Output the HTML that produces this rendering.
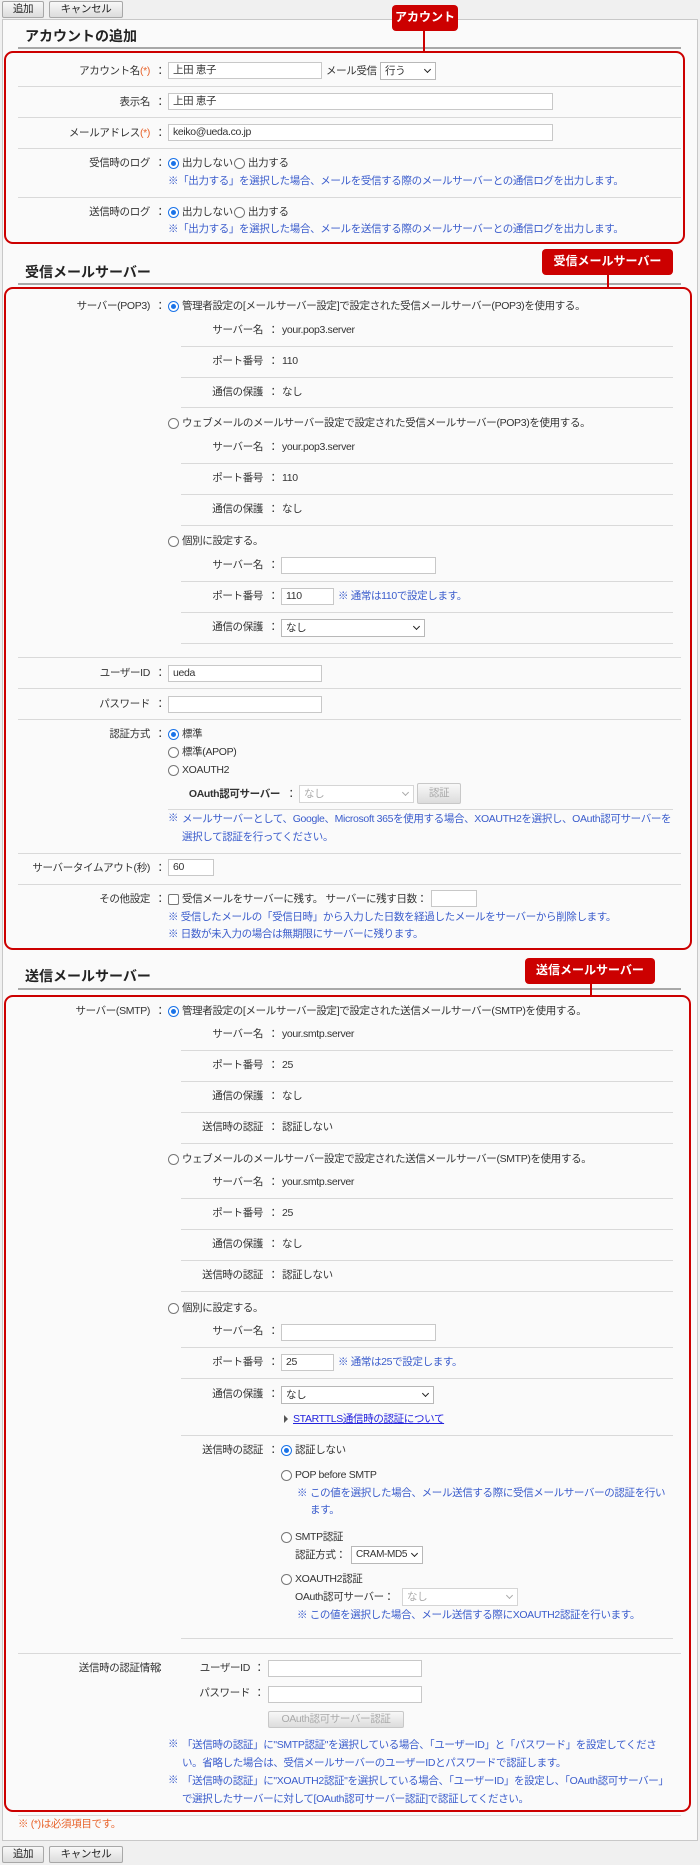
<!DOCTYPE html>
<html><head><meta charset="utf-8"><style>
*{margin:0;padding:0;box-sizing:border-box}
body{width:700px;height:1865px;background:#f0f0f0;position:relative;overflow:hidden;font-family:"Liberation Sans","Noto Sans CJK JP",sans-serif;font-size:10.5px;color:#333;letter-spacing:-0.35px}
.a{position:absolute}
.t{position:absolute;white-space:nowrap;line-height:16px;height:16px}
.r{text-align:right}
.n{color:#3a5ccc}
.o{color:#e8642c}
.h{position:absolute;left:25px;font-size:14px;font-weight:bold;color:#222;line-height:18px;white-space:nowrap;letter-spacing:0}
.ul{position:absolute;left:18px;width:663px;height:2px;background:#a8a8a8}
.s{position:absolute;height:1px;background:#d9d9d9}
.in{position:absolute;height:17px;background:#fff;border:1px solid #c8c8c8;line-height:15px;padding-left:4px;font-size:10.5px;white-space:nowrap}
.sel{position:absolute;height:18px;background:#fff;border:1px solid #b8b8b8;line-height:16px;padding-left:4px;white-space:nowrap;overflow:hidden}
.sel:after{content:"";position:absolute;right:5px;top:4px;width:4px;height:4px;border-right:1.5px solid #222;border-bottom:1.5px solid #222;transform:rotate(45deg)}
.sel.d{color:#aaa;border-color:#d5d5d5}
.sel.d:after{border-color:#aaa}
.rb{position:absolute;width:11px;height:11px;border:1px solid #777;border-radius:50%;background:#fff}
.rb.c{border-color:#1a73e8}
.rb.c:after{content:"";position:absolute;left:2px;top:2px;width:5px;height:5px;border-radius:50%;background:#1a73e8}
.cb{position:absolute;width:11px;height:11px;border:1px solid #777;border-radius:2px;background:#fff}
.btn{position:absolute;height:17px;border:1px solid #a8a8a8;border-radius:2px;background:linear-gradient(#f8f8f8,#dcdcdc);text-align:center;line-height:15px;font-size:10.5px;color:#222}
.btn.d{color:#aaa;border-color:#c8c8c8}
.box{position:absolute;border:2px solid #cc0000;border-radius:9px}
.lab{position:absolute;background:#cc0000;color:#fff;font-weight:bold;font-size:12px;border-radius:4px;text-align:center;line-height:24px;height:26px;letter-spacing:0}
.ln{position:absolute;width:2px;background:#cc0000}
</style></head><body>

<div class="btn" style="left:2px;top:1px;width:42px">追加</div>
<div class="btn" style="left:49px;top:1px;width:74px">キャンセル</div>

<div class="a" style="left:2px;top:19px;width:696px;height:1822px;background:#fafafa;border:1px solid #c8c8c8"></div>

<!-- Account -->
<div class="h" style="top:27px">アカウントの追加</div>
<div class="ul" style="top:47px"></div>
<div class="box" style="left:4px;top:51px;width:681px;height:193px"></div>
<div class="ln" style="left:423px;top:30px;height:22px"></div>
<div class="lab" style="left:392px;top:5px;width:66px">アカウント</div>

<div class="t r" style="right:550px;top:63px">アカウント名<span class="o">(*)</span></div><div class="t" style="left:155px;top:63px">：</div>
<div class="in" style="left:168px;top:62px;width:154px">上田 恵子</div>
<div class="t" style="left:326px;top:63px">メール受信</div>
<div class="sel" style="left:380px;top:62px;width:56px">行う</div>
<div class="s" style="left:18px;top:86px;width:663px"></div>
<div class="t r" style="right:550px;top:94px">表示名</div><div class="t" style="left:155px;top:94px">：</div>
<div class="in" style="left:168px;top:93px;width:385px">上田 恵子</div>
<div class="s" style="left:18px;top:117px;width:663px"></div>
<div class="t r" style="right:550px;top:125px">メールアドレス<span class="o">(*)</span></div><div class="t" style="left:155px;top:125px">：</div>
<div class="in" style="left:168px;top:124px;width:385px">keiko@ueda.co.jp</div>
<div class="s" style="left:18px;top:148px;width:663px"></div>
<div class="t r" style="right:550px;top:155px">受信時のログ</div><div class="t" style="left:155px;top:155px">：</div>
<div class="rb c" style="left:168px;top:158px"></div><div class="t" style="left:182px;top:155px">出力しない</div>
<div class="rb" style="left:234px;top:158px"></div><div class="t" style="left:248px;top:155px">出力する</div>
<div class="t n" style="left:168px;top:173px">※「出力する」を選択した場合、メールを受信する際のメールサーバーとの通信ログを出力します。</div>
<div class="s" style="left:18px;top:197px;width:663px"></div>
<div class="t r" style="right:550px;top:204px">送信時のログ</div><div class="t" style="left:155px;top:204px">：</div>
<div class="rb c" style="left:168px;top:207px"></div><div class="t" style="left:182px;top:204px">出力しない</div>
<div class="rb" style="left:234px;top:207px"></div><div class="t" style="left:248px;top:204px">出力する</div>
<div class="t n" style="left:168px;top:221px">※「出力する」を選択した場合、メールを送信する際のメールサーバーとの通信ログを出力します。</div>

<!-- POP3 -->
<div class="h" style="top:263px">受信メールサーバー</div>
<div class="ul" style="top:283px"></div>
<div class="box" style="left:4px;top:287px;width:688px;height:663px"></div>
<div class="ln" style="left:607px;top:270px;height:18px"></div>
<div class="lab" style="left:542px;top:249px;width:131px">受信メールサーバー</div>

<div class="t r" style="right:550px;top:298px">サーバー(POP3)</div><div class="t" style="left:155px;top:298px">：</div>
<div class="rb c" style="left:168px;top:301px"></div><div class="t" style="left:182px;top:298px">管理者設定の[メールサーバー設定]で設定された受信メールサーバー(POP3)を使用する。</div>
<div class="t r" style="right:437px;top:322px">サーバー名</div><div class="t" style="left:268px;top:322px">：</div><div class="t" style="left:282px;top:322px">your.pop3.server</div>
<div class="s" style="left:181px;top:346px;width:492px"></div>
<div class="t r" style="right:437px;top:353px">ポート番号</div><div class="t" style="left:268px;top:353px">：</div><div class="t" style="left:282px;top:353px">110</div>
<div class="s" style="left:181px;top:377px;width:492px"></div>
<div class="t r" style="right:437px;top:384px">通信の保護</div><div class="t" style="left:268px;top:384px">：</div><div class="t" style="left:282px;top:384px">なし</div>
<div class="s" style="left:181px;top:407px;width:492px"></div>
<div class="rb" style="left:168px;top:418px"></div><div class="t" style="left:182px;top:415px">ウェブメールのメールサーバー設定で設定された受信メールサーバー(POP3)を使用する。</div>
<div class="t r" style="right:437px;top:439px">サーバー名</div><div class="t" style="left:268px;top:439px">：</div><div class="t" style="left:282px;top:439px">your.pop3.server</div>
<div class="s" style="left:181px;top:463px;width:492px"></div>
<div class="t r" style="right:437px;top:470px">ポート番号</div><div class="t" style="left:268px;top:470px">：</div><div class="t" style="left:282px;top:470px">110</div>
<div class="s" style="left:181px;top:494px;width:492px"></div>
<div class="t r" style="right:437px;top:501px">通信の保護</div><div class="t" style="left:268px;top:501px">：</div><div class="t" style="left:282px;top:501px">なし</div>
<div class="s" style="left:181px;top:525px;width:492px"></div>
<div class="rb" style="left:168px;top:536px"></div><div class="t" style="left:182px;top:533px">個別に設定する。</div>
<div class="t r" style="right:437px;top:557px">サーバー名</div><div class="t" style="left:268px;top:557px">：</div>
<div class="in" style="left:281px;top:557px;width:155px"></div>
<div class="s" style="left:181px;top:581px;width:492px"></div>
<div class="t r" style="right:437px;top:588px">ポート番号</div><div class="t" style="left:268px;top:588px">：</div>
<div class="in" style="left:281px;top:588px;width:53px">110</div><div class="t n" style="left:338px;top:588px">※ 通常は110で設定します。</div>
<div class="s" style="left:181px;top:612px;width:492px"></div>
<div class="t r" style="right:437px;top:619px">通信の保護</div><div class="t" style="left:268px;top:619px">：</div>
<div class="sel" style="left:281px;top:619px;width:144px">なし</div>
<div class="s" style="left:181px;top:643px;width:492px"></div>
<div class="s" style="left:18px;top:657px;width:663px"></div>

<div class="t r" style="right:550px;top:665px">ユーザーID</div><div class="t" style="left:155px;top:665px">：</div>
<div class="in" style="left:168px;top:665px;width:154px">ueda</div>
<div class="s" style="left:18px;top:688px;width:663px"></div>
<div class="t r" style="right:550px;top:696px">パスワード</div><div class="t" style="left:155px;top:696px">：</div>
<div class="in" style="left:168px;top:696px;width:154px"></div>
<div class="s" style="left:18px;top:719px;width:663px"></div>
<div class="t r" style="right:550px;top:726px">認証方式</div><div class="t" style="left:155px;top:726px">：</div>
<div class="rb c" style="left:168px;top:729px"></div><div class="t" style="left:182px;top:726px">標準</div>
<div class="rb" style="left:168px;top:747px"></div><div class="t" style="left:182px;top:744px">標準(APOP)</div>
<div class="rb" style="left:168px;top:765px"></div><div class="t" style="left:182px;top:762px">XOAUTH2</div>
<div class="t r" style="right:420px;top:786px;font-weight:bold">OAuth認可サーバー</div><div class="t" style="left:286px;top:786px">：</div>
<div class="sel d" style="left:299px;top:785px;width:115px">なし</div>
<div class="btn d" style="left:417px;top:783px;width:44px;height:21px;line-height:19px">認証</div>
<div class="s" style="left:168px;top:809px;width:505px"></div>
<div class="t n" style="left:168px;top:810px">※</div><div class="a n" style="left:182px;top:810px;width:494px;line-height:18px">メールサーバーとして、Google、Microsoft 365を使用する場合、XOAUTH2を選択し、OAuth認可サーバーを選択して認証を行ってください。</div>
<div class="s" style="left:18px;top:853px;width:663px"></div>
<div class="t r" style="right:550px;top:860px">サーバータイムアウト(秒)</div><div class="t" style="left:155px;top:860px">：</div>
<div class="in" style="left:168px;top:859px;width:46px">60</div>
<div class="s" style="left:18px;top:884px;width:663px"></div>
<div class="t r" style="right:550px;top:891px">その他設定</div><div class="t" style="left:155px;top:891px">：</div>
<div class="cb" style="left:168px;top:894px"></div><div class="t" style="left:182px;top:891px">受信メールをサーバーに残す。 サーバーに残す日数：</div>
<div class="in" style="left:431px;top:890px;width:46px"></div>
<div class="t n" style="left:168px;top:909px">※ 受信したメールの「受信日時」から入力した日数を経過したメールをサーバーから削除します。</div>
<div class="t n" style="left:168px;top:926px">※ 日数が未入力の場合は無期限にサーバーに残ります。</div>

<!-- SMTP -->
<div class="h" style="top:967px">送信メールサーバー</div>
<div class="ul" style="top:988px"></div>
<div class="box" style="left:4px;top:995px;width:687px;height:817px"></div>
<div class="ln" style="left:590px;top:982px;height:14px"></div>
<div class="lab" style="left:525px;top:958px;width:130px">送信メールサーバー</div>

<div class="t r" style="right:550px;top:1003px">サーバー(SMTP)</div><div class="t" style="left:155px;top:1003px">：</div>
<div class="rb c" style="left:168px;top:1006px"></div><div class="t" style="left:182px;top:1003px">管理者設定の[メールサーバー設定]で設定された送信メールサーバー(SMTP)を使用する。</div>
<div class="t r" style="right:437px;top:1026px">サーバー名</div><div class="t" style="left:268px;top:1026px">：</div><div class="t" style="left:282px;top:1026px">your.smtp.server</div>
<div class="s" style="left:181px;top:1050px;width:492px"></div>
<div class="t r" style="right:437px;top:1057px">ポート番号</div><div class="t" style="left:268px;top:1057px">：</div><div class="t" style="left:282px;top:1057px">25</div>
<div class="s" style="left:181px;top:1081px;width:492px"></div>
<div class="t r" style="right:437px;top:1088px">通信の保護</div><div class="t" style="left:268px;top:1088px">：</div><div class="t" style="left:282px;top:1088px">なし</div>
<div class="s" style="left:181px;top:1112px;width:492px"></div>
<div class="t r" style="right:437px;top:1119px">送信時の認証</div><div class="t" style="left:268px;top:1119px">：</div><div class="t" style="left:282px;top:1119px">認証しない</div>
<div class="s" style="left:181px;top:1143px;width:492px"></div>
<div class="rb" style="left:168px;top:1154px"></div><div class="t" style="left:182px;top:1151px">ウェブメールのメールサーバー設定で設定された送信メールサーバー(SMTP)を使用する。</div>
<div class="t r" style="right:437px;top:1174px">サーバー名</div><div class="t" style="left:268px;top:1174px">：</div><div class="t" style="left:282px;top:1174px">your.smtp.server</div>
<div class="s" style="left:181px;top:1198px;width:492px"></div>
<div class="t r" style="right:437px;top:1205px">ポート番号</div><div class="t" style="left:268px;top:1205px">：</div><div class="t" style="left:282px;top:1205px">25</div>
<div class="s" style="left:181px;top:1229px;width:492px"></div>
<div class="t r" style="right:437px;top:1236px">通信の保護</div><div class="t" style="left:268px;top:1236px">：</div><div class="t" style="left:282px;top:1236px">なし</div>
<div class="s" style="left:181px;top:1260px;width:492px"></div>
<div class="t r" style="right:437px;top:1267px">送信時の認証</div><div class="t" style="left:268px;top:1267px">：</div><div class="t" style="left:282px;top:1267px">認証しない</div>
<div class="s" style="left:181px;top:1291px;width:492px"></div>
<div class="rb" style="left:168px;top:1303px"></div><div class="t" style="left:182px;top:1300px">個別に設定する。</div>
<div class="t r" style="right:437px;top:1323px">サーバー名</div><div class="t" style="left:268px;top:1323px">：</div>
<div class="in" style="left:281px;top:1324px;width:155px"></div>
<div class="s" style="left:181px;top:1347px;width:492px"></div>
<div class="t r" style="right:437px;top:1354px">ポート番号</div><div class="t" style="left:268px;top:1354px">：</div>
<div class="in" style="left:281px;top:1354px;width:53px">25</div><div class="t n" style="left:338px;top:1354px">※ 通常は25で設定します。</div>
<div class="s" style="left:181px;top:1378px;width:492px"></div>
<div class="t r" style="right:437px;top:1386px">通信の保護</div><div class="t" style="left:268px;top:1386px">：</div>
<div class="sel" style="left:281px;top:1386px;width:153px">なし</div>
<div class="a" style="left:284px;top:1415px;width:0;height:0;border-left:4px solid #555;border-top:4px solid transparent;border-bottom:4px solid transparent"></div>
<div class="t" style="left:293px;top:1411px;color:#2222dd;text-decoration:underline">STARTTLS通信時の認証について</div>
<div class="s" style="left:181px;top:1435px;width:492px"></div>
<div class="t r" style="right:437px;top:1442px">送信時の認証</div><div class="t" style="left:268px;top:1442px">：</div>
<div class="rb c" style="left:281px;top:1445px"></div><div class="t" style="left:295px;top:1442px">認証しない</div>
<div class="rb" style="left:281px;top:1470px"></div><div class="t" style="left:295px;top:1467px">POP before SMTP</div>
<div class="t n" style="left:297px;top:1485px">※</div><div class="a n" style="left:310px;top:1485px;width:362px;line-height:17px">この値を選択した場合、メール送信する際に受信メールサーバーの認証を行います。</div>
<div class="rb" style="left:281px;top:1532px"></div><div class="t" style="left:295px;top:1529px">SMTP認証</div>
<div class="t" style="left:295px;top:1547px">認証方式：</div>
<div class="sel" style="left:351px;top:1546px;width:72px;font-size:10px">CRAM-MD5</div>
<div class="rb" style="left:281px;top:1574px"></div><div class="t" style="left:295px;top:1571px">XOAUTH2認証</div>
<div class="t" style="left:295px;top:1589px">OAuth認可サーバー：</div>
<div class="sel d" style="left:402px;top:1588px;width:116px">なし</div>
<div class="t n" style="left:297px;top:1607px">※ この値を選択した場合、メール送信する際にXOAUTH2認証を行います。</div>
<div class="s" style="left:181px;top:1638px;width:492px"></div>
<div class="s" style="left:18px;top:1653px;width:663px"></div>
<div class="t r" style="right:540px;top:1660px">送信時の認証情報</div><div class="t" style="left:155px;top:1660px">：</div>
<div class="t r" style="right:450px;top:1660px">ユーザーID</div><div class="t" style="left:254px;top:1660px">：</div>
<div class="in" style="left:268px;top:1660px;width:154px"></div>
<div class="t r" style="right:450px;top:1685px">パスワード</div><div class="t" style="left:254px;top:1685px">：</div>
<div class="in" style="left:268px;top:1686px;width:154px"></div>
<div class="btn d" style="left:268px;top:1711px;width:136px;height:17px">OAuth認可サーバー認証</div>
<div class="t n" style="left:168px;top:1736px">※</div><div class="a n" style="left:182px;top:1736px;width:480px;line-height:18px">「送信時の認証」に"SMTP認証"を選択している場合、「ユーザーID」と「パスワード」を設定してください。省略した場合は、受信メールサーバーのユーザーIDとパスワードで認証します。</div>
<div class="t n" style="left:168px;top:1772px">※</div><div class="a n" style="left:182px;top:1772px;width:484px;line-height:18px">「送信時の認証」に"XOAUTH2認証"を選択している場合、「ユーザーID」を設定し、「OAuth認可サーバー」で選択したサーバーに対して[OAuth認可サーバー認証]で認証してください。</div>

<div class="s" style="left:18px;top:1815px;width:663px"></div>
<div class="t o" style="left:18px;top:1816px">※ (*)は必須項目です。</div>

<div class="btn" style="left:2px;top:1846px;width:42px">追加</div>
<div class="btn" style="left:49px;top:1846px;width:74px">キャンセル</div>
</body></html>
